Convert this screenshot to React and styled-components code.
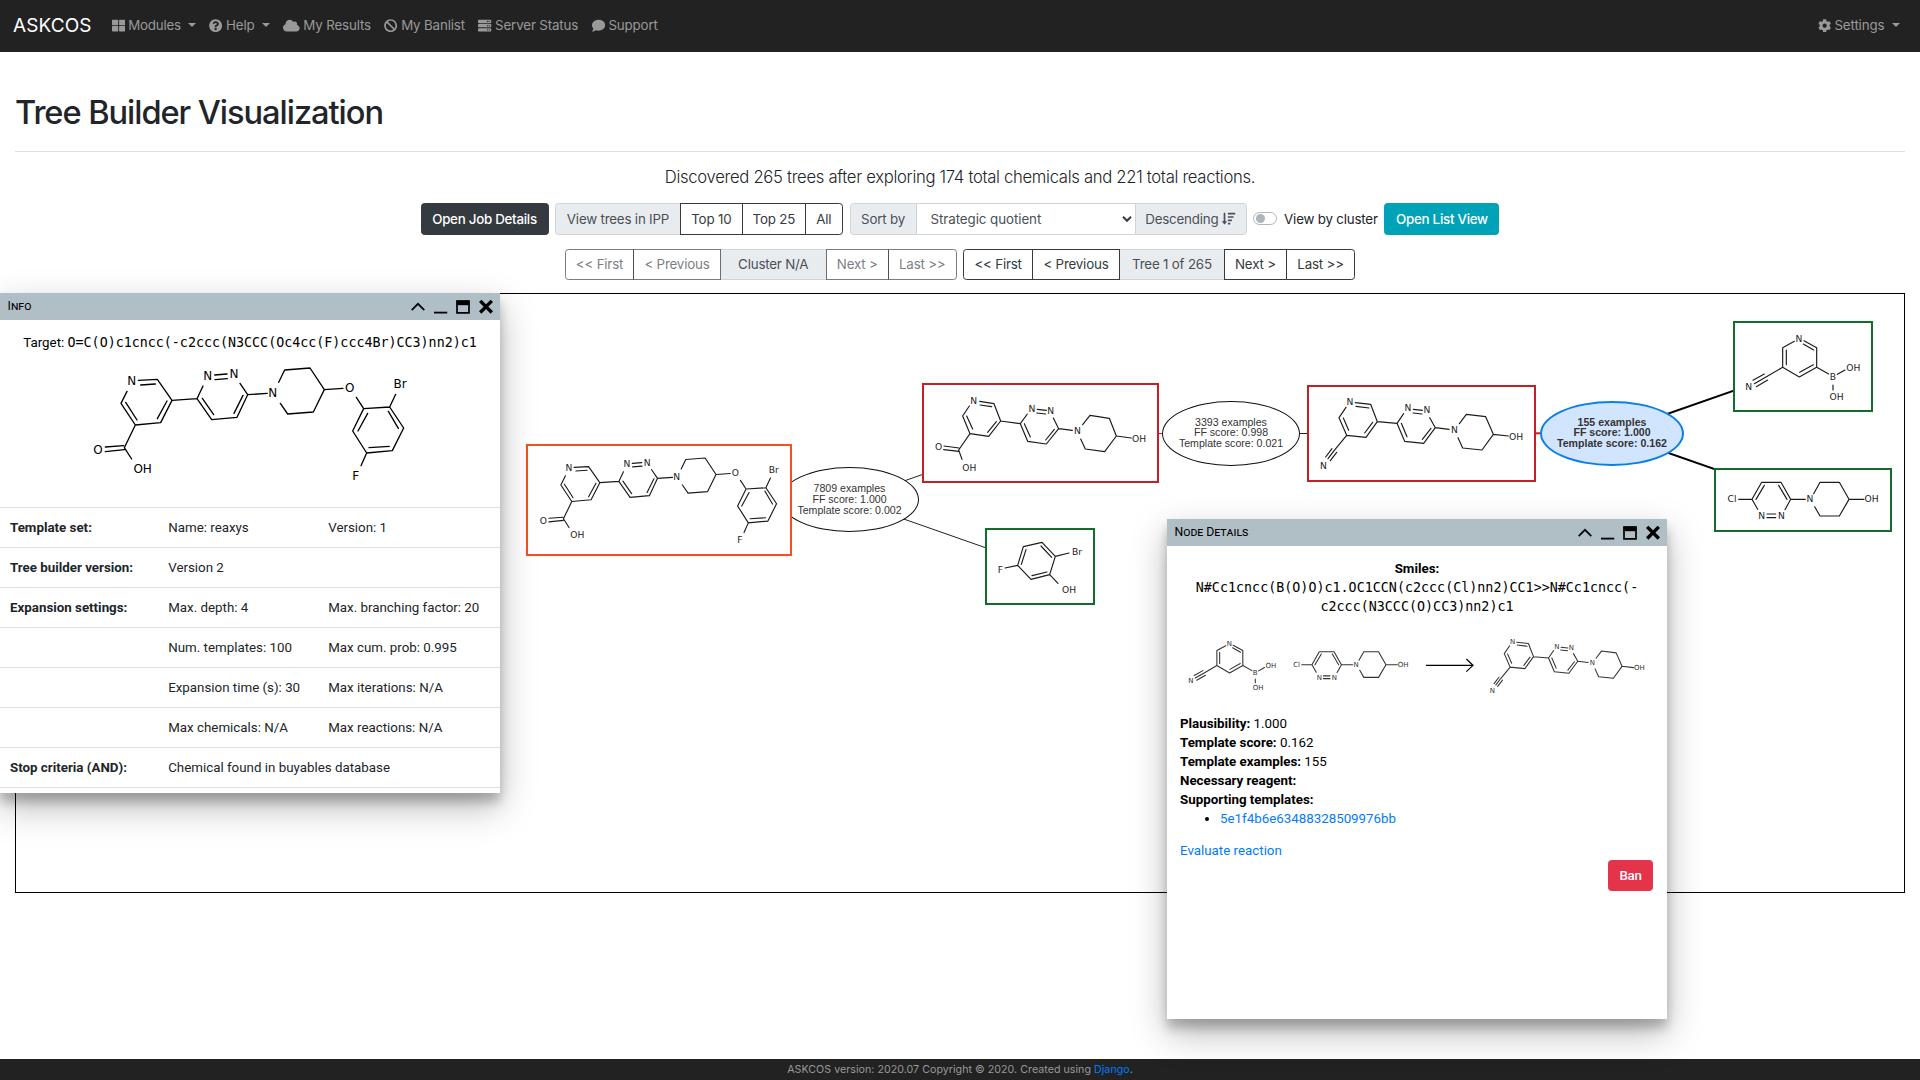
import React from "react";
import styled, { createGlobalStyle } from "styled-components";
import {
  FaThLarge,
  FaQuestionCircle,
  FaCloud,
  FaBan,
  FaServer,
  FaComment,
  FaCog,
  FaSortAmountDown,
} from "react-icons/fa";

const GlobalStyle = createGlobalStyle`
  *, *::before, *::after { box-sizing: border-box; }
  body {
    margin: 0;
    background: #fff;
    color: #212529;
    font-family: Inter, "Liberation Sans", sans-serif;
    font-size: 13.33px;
    line-height: 20px;
    letter-spacing: -0.19px;
    overflow: hidden;
  }
  a { color: #007bff; text-decoration: none; }
`;

/* ---------- page frame ---------- */

const Page = styled.div`
  position: relative;
  display: flex;
  flex-direction: column;
  height: 1080px;
  overflow: hidden;
`;

const Navbar = styled.nav`
  display: flex;
  align-items: center;
  height: 52px;
  padding: 0 20.5px 1.6px 13px;
  background: #222;
  color: #999;
  flex: none;
`;

const Brand = styled.span`
  width: 98.6px;
  color: #fff;
  font-size: 19px;
  letter-spacing: 0.1px;
  line-height: 25px;
`;

const NavLinks = styled.div`
  display: flex;
  gap: 13.5px;
  flex: 1;
`;

const NavLink = styled.a`
  display: flex;
  align-items: center;
  gap: 3.4px;
  color: #999;
  letter-spacing: ${(p) => p.$track || "-0.15px"};
  svg { width: ${(p) => p.$icon || 13.3}px; height: 13.3px; }
`;

const Caret = styled.span`
  margin-left: 3.8px;
  margin-top: -1px;
  border-top: 4px solid #999;
  border-left: 4px solid transparent;
  border-right: 4px solid transparent;
`;

const Main = styled.main`
  flex: 1;
  padding: 40.4px 15px 0;
`;

const Title = styled.h2`
  margin: 0;
  padding-bottom: 18.6px;
  border-bottom: 1px solid #dfe0e1;
  font-size: 32.6px;
  font-weight: 500;
  line-height: 40px;
  letter-spacing: -1.04px;
`;

const Lead = styled.p`
  margin: 13px 0 13px;
  font-size: 16.67px;
  font-weight: 300;
  line-height: 25px;
  letter-spacing: -0.31px;
  text-align: center;
`;

const Toolbar = styled.div`
  display: flex;
  justify-content: center;
  align-items: center;
  gap: ${(p) => p.$gap}px;
  height: ${(p) => p.$h}px;
  margin-bottom: ${(p) => p.$mb}px;
`;

const Cell = styled.div`
  display: flex;
  align-items: center;
  justify-content: center;
  gap: 4px;
  width: ${(p) => p.$w}px;
  height: 100%;
  border: 1px solid #ced4da;
  background: #e9ecef;
  color: #495057;
  white-space: nowrap;
`;

const Button = styled.button`
  position: relative;
  width: ${(p) => p.$w}px;
  height: 100%;
  padding: 0;
  border: 1px solid ${(p) => p.$fill || "#343a40"};
  border-radius: 3.4px;
  background: ${(p) => p.$fill || "#fff"};
  color: ${(p) => (p.$fill ? "#fff" : "#343a40")};
  font: inherit;
  font-weight: ${(p) => (p.$fill ? 500 : 400)};
  letter-spacing: ${(p) => (p.$fill ? "-0.26px" : "inherit")};
  white-space: nowrap;
  &:disabled { opacity: 0.65; }
`;

const Group = styled.div`
  display: flex;
  height: 100%;
  && > * { border-radius: 0; margin-left: -1px; }
  && > *:first-child { border-radius: 3.4px 0 0 3.4px; margin-left: 0; }
  && > *:last-child { border-radius: 0 3.4px 3.4px 0; }
`;

const SelectBox = styled(Cell)`
  justify-content: space-between;
  padding: 0 3px 0 14px;
  background: #fff;
  letter-spacing: -0.06px;
`;

const SwitchLabel = styled.label`
  display: flex;
  align-items: center;
  gap: 7px;
  width: 124.6px;
  white-space: nowrap;
`;

const SwitchTrack = styled.span`
  display: flex;
  align-items: center;
  width: 24px;
  height: 13px;
  padding-left: 1.5px;
  border: 1px solid #adb5bd;
  border-radius: 7px;
  &::before {
    content: "";
    width: 9px;
    height: 9px;
    border-radius: 50%;
    background: #adb5bd;
  }
`;

const Footer = styled.footer`
  flex: none;
  height: 21px;
  background: #222;
  color: #999;
  font-size: 10.67px;
  line-height: 21px;
  letter-spacing: 0.03px;
  text-align: center;
`;

/* ---------- tree canvas ---------- */

const Canvas = styled.div`
  position: relative;
  height: 600px;
  border: 1px solid #000;
`;

/* the network is laid out in page coordinates; this shifts it onto the canvas */
const Network = styled.div`
  position: absolute;
  left: -16px;
  top: -294px;
  width: 1920px;
  height: 900px;
`;

const Edges = styled.svg`
  position: absolute;
  left: 0;
  top: 0;
`;

const ChemicalNode = styled.div`
  position: absolute;
  left: ${(p) => p.$x}px;
  top: ${(p) => p.$y}px;
  width: ${(p) => p.$w}px;
  height: ${(p) => p.$h}px;
  border: 2px solid ${(p) => p.$color};
  background: #fff;
  svg { display: block; width: 100%; height: 100%; }
`;

const ReactionNode = styled.div`
  position: absolute;
  left: ${(p) => p.$x}px;
  top: ${(p) => p.$y}px;
  width: ${(p) => p.$w}px;
  height: 65px;
  padding-bottom: 1.5px;
  display: flex;
  flex-direction: column;
  justify-content: center;
  align-items: center;
  border: ${(p) => (p.$selected ? "2px solid #0b7fe8" : "1px solid #111")};
  border-radius: 50%;
  background: ${(p) => (p.$selected ? "#d2e5ff" : "#fff")};
  color: #343434;
  font: ${(p) => (p.$selected ? 700 : 400)} 10.6px/10.8px "Liberation Sans", sans-serif;
  letter-spacing: 0;
  white-space: nowrap;
`;

/* ---------- floating windows ---------- */

const Window = styled.section`
  position: absolute;
  left: ${(p) => p.$x}px;
  top: ${(p) => p.$y}px;
  width: 500px;
  height: 500px;
  overflow: hidden;
  background: #fff;
  color: #000;
  font-family: Roboto, sans-serif;
  letter-spacing: 0;
`;

const WindowShadow = styled.div`
  position: absolute;
  left: ${(p) => p.$x}px;
  top: ${(p) => p.$y}px;
  width: 500px;
  height: 500px;
  box-shadow: 0 14px 34px rgba(0, 0, 0, 0.28), 0 9px 10px rgba(0, 0, 0, 0.22);
`;

const WindowHeader = styled.header`
  display: flex;
  align-items: center;
  justify-content: space-between;
  height: 27px;
  padding: 0 7.2px 0 7.6px;
  background: #b0bec5;
`;

const WindowTitle = styled.span`
  font-size: 12.2px;
  font-variant: small-caps;
  line-height: 27px;
`;

const Controls = styled.div`
  display: flex;
  gap: 8.67px;
  svg { display: block; width: 14px; height: 14px; overflow: visible; }
`;

const Mono = styled.span`
  font-family: "DejaVu Sans Mono", monospace;
  font-size: 13.33px;
`;

const TargetLine = styled.div`
  padding-top: 13px;
  height: 33px;
  text-align: center;
  white-space: nowrap;
`;

const Drawing = styled.svg`
  display: block;
  width: ${(p) => p.$w}px;
  height: ${(p) => p.$h}px;
`;

const SettingsRow = styled.div`
  display: grid;
  grid-template-columns: 158.2px 160px 1fr;
  align-items: center;
  height: 40px;
  padding-left: 10px;
  border-top: 1px solid #dee2e6;
  color: #212529;
  white-space: nowrap;
  > *:nth-child(2):last-child { grid-column: 2 / 4; }
`;

const NodeBody = styled.div`
  padding: 13px 13px 0;
  line-height: 19px;
`;

const Smiles = styled.div`
  text-align: center;
`;

const SmilesLine = styled.div`
  height: 19px;
  letter-spacing: 0.02px;
  white-space: nowrap;
`;

const TemplateList = styled.ul`
  margin: 0 0 13.3px;
  padding-left: 40px;
`;

const BanRow = styled.div`
  display: flex;
  justify-content: flex-end;
  height: 31px;
  padding-right: 1px;
`;

/* ---------- molecules ---------- */

const molecules = {
  target: {
    font: 36,
    bonds:
      "M415 286L472 283L516 346L482 413L406 420L363 355L381 319M422 300L466 297M501 348L472 401M411 405L377 352" +
      "M516 346L591 341L609 303M644 270L681 267M645 284L682 281M720 295L743 329L711 397L635 404L591 341M729 331L702 385M641 389L607 340M743 329L802 325" +
      "M836 292L854 255L930 249L973 314L940 381L863 387L841 355M973 314L1029 310M1069 337L1091 371L1169 366L1211 429L1177 497L1100 504L1058 438L1091 371" +
      "M1103 385L1074 438M1165 379L1195 430M1168 484L1107 488M1169 366L1187 328M1100 504L1083 542M406 420L373 488L395 522M371 482L316 486M373 494L316 500",
    labels: [["N", 395, 300], ["N", 623, 285], ["N", 702, 279], ["N", 818, 337], ["O", 1049, 321], ["Br", 1200, 309], ["O", 294, 507], ["OH", 428, 564], ["F", 1067, 585]],
  },
  acid: {
    font: 27.5,
    bonds:
      "M209 94L252 101L272 153L236 199L180 191L158 138L178 108M210 105L245 110M259 155L233 187M188 177L170 138" +
      "M272 153L331 161L352 132M382 118L409 121M380 129L407 132M430 144L446 176L409 222L353 214L331 161M433 178L407 210M361 201L343 161M446 176L487 181" +
      "M518 164L540 136L598 145L619 198L584 245L526 237L512 207M619 198L664 204M180 191L146 240L156 268M147 234L102 228M146 244L101 239",
    labels: [["N", 191, 102], ["N", 366, 125], ["N", 422, 131], ["N", 502, 193], ["OH", 687, 215], ["O", 86, 240], ["OH", 178, 302]],
  },
  nitrile: {
    font: 27.5,
    bonds:
      "M196 98L242 103L262 155L228 202L170 196L147 143L168 112M198 109L237 114M248 157L224 189M176 181L160 144" +
      "M262 155L321 160L341 131M370 118L397 121M369 129L396 132M419 143L436 173L401 220L344 214L321 160M423 175L397 208M351 200L334 160M436 173L477 178" +
      "M508 161L529 133L587 140L610 193L576 240L518 234L504 203M610 193L655 198M170 196L133 241L114 266M126 236L107 261M140 247L121 272",
    labels: [["N", 180, 106], ["N", 354, 124], ["N", 411, 130], ["N", 493, 189], ["OH", 678, 209], ["N", 100, 297]],
  },
  boronic: {
    font: 27.5,
    bonds:
      "M403 124L368 143L368 202L418 231L470 202L470 143L432 122M379 150L379 194M419 217L460 194M461 150L430 132" +
      "M368 202L318 231L283 251M313 222L279 241M323 240L289 260M470 202L506 222M532 223L555 210M519 255L519 270",
    labels: [["N", 417, 126], ["N", 266, 269], ["B", 519, 241], ["OH", 580, 212], ["OH", 530, 299]],
  },
  chloride: {
    font: 27.5,
    bonds:
      "M236 598L276 598L305 547L363 547L392 598L375 629M293 628L276 598M288 598L313 556M356 556L381 598M321 642L347 642M321 653L347 653" +
      "M392 598L436 598M461 581L480 547L538 547L567 598L538 648L480 648L464 620M567 598L612 598",
    labels: [["Cl", 216, 607], ["N", 305, 658], ["N", 364, 658], ["N", 450, 607], ["OH", 635, 607]],
  },
  phenol: {
    font: 27.5,
    bonds:
      "M54 111L92 103L109 47L165 34L205 76L188 131L132 145L92 103M180 123L135 134M194 79L162 45M117 56L103 100M205 76L246 66M188 131L213 157",
    labels: [["F", 40, 125], ["Br", 270, 73], ["OH", 246, 186]],
  },
};

function Molecule({ name, width = 3.5, color = "#1c1c1c", transform }) {
  const m = molecules[name];
  return (
    <g transform={transform}>
      <path d={m.bonds} fill="none" stroke={color} strokeWidth={width} strokeLinecap="round" strokeLinejoin="round" />
      <g fill={color} fontFamily="DejaVu Sans, sans-serif" fontSize={m.font} textAnchor="middle" letterSpacing="0">
        {m.labels.map(([text, x, y]) => (
          <text key={`${x}-${y}`} x={x} y={y}>{text}</text>
        ))}
      </g>
    </g>
  );
}

const RED = "#c41e26";
const GREEN = "#146b2e";

const chemicalNodes = [
  { name: "target", x: 526, y: 444, w: 266, h: 112, color: "#f4511e", view: "233.8 201.8 1030 424.6", stroke: 4.5 },
  { name: "acid", x: 922, y: 383, w: 237, h: 100, color: RED, view: "42 45 699 288" },
  { name: "phenol", x: 985, y: 528, w: 110, h: 77, color: GREEN, view: "0 -3 318 219" },
  { name: "nitrile", x: 1307, y: 385, w: 229, h: 97, color: RED, view: "57 51 675 279" },
  { name: "boronic", x: 1733, y: 321, w: 140, h: 91, color: GREEN, view: "225 69 408 261" },
  { name: "chloride", x: 1714, y: 468, w: 178, h: 64, color: GREEN, view: "168 510 522 180" },
];

const reactionNodes = [
  { x: 780, y: 467.5, w: 139, lines: ["7809 examples", "FF score: 1.000", "Template score: 0.002"] },
  { x: 1162, y: 401, w: 138, lines: ["3393 examples", "FF score: 0.998", "Template score: 0.021"] },
  { x: 1540, y: 401, w: 144, lines: ["155 examples", "FF score: 1.000", "Template score: 0.162"], selected: true },
];

const settings = [
  ["Template set:", "Name: reaxys", "Version: 1"],
  ["Tree builder version:", "Version 2"],
  ["Expansion settings:", "Max. depth: 4", "Max. branching factor: 20"],
  ["", "Num. templates: 100", "Max cum. prob: 0.995"],
  ["", "Expansion time (s): 30", "Max iterations: N/A"],
  ["", "Max chemicals: N/A", "Max reactions: N/A"],
  ["Stop criteria (AND):", "Chemical found in buyables database"],
  ["", ""],
];

function WindowControls() {
  return (
    <Controls>
      <svg viewBox="0 0 14 14"><path d="M0.7 10.2L7 3.8L13.3 10.2" fill="none" stroke="#000" strokeWidth="1.7" /></svg>
      <svg viewBox="0 0 14 14"><path d="M0 12.6H13.2" stroke="#000" strokeWidth="1.8" /></svg>
      <svg viewBox="0 0 14 14"><path d="M1 1.2H13V12.9H1Z" fill="none" stroke="#000" strokeWidth="1.7" /><path d="M0.6 0.5H13.4V5.2H0.6Z" /></svg>
      <svg viewBox="0 0 14 14"><path d="M1.2 0.9L12.8 12.5M12.8 0.9L1.2 12.5" stroke="#000" strokeWidth="3.4" /></svg>
    </Controls>
  );
}

function TreeNetwork() {
  return (
    <Network>
      <Edges width="1920" height="900" fill="none" stroke="#222">
        <path d="M849.5 500L1040.5 433.3M849.5 500L1040.5 567" />
        <path d="M1230 433.5H1420" />
        <path d="M1150 433.5H1170" stroke={RED} />
        <path d="M1530 433.3H1550" stroke={RED} strokeWidth="2" />
        <path d="M1612 433.3L1803 366.5M1612 433.3L1803 500" stroke="#000" strokeWidth="2" />
      </Edges>
      {reactionNodes.map((n) => (
        <ReactionNode key={n.x} $x={n.x} $y={n.y} $w={n.w} $selected={n.selected}>
          {n.lines.map((line) => <span key={line}>{line}</span>)}
        </ReactionNode>
      ))}
      {chemicalNodes.map((n) => (
        <ChemicalNode key={n.name} $x={n.x} $y={n.y} $w={n.w} $h={n.h} $color={n.color}>
          <svg viewBox={n.view}><Molecule name={n.name} width={n.stroke} /></svg>
        </ChemicalNode>
      ))}
    </Network>
  );
}

function InfoWindow() {
  return (
    <Window $x={0} $y={293}>
      <WindowHeader><WindowTitle>Info</WindowTitle><WindowControls /></WindowHeader>
      <TargetLine>Target: <Mono>O=C(O)c1cncc(-c2ccc(N3CCC(Oc4cc(F)ccc4Br)CC3)nn2)c1</Mono></TargetLine>
      <Drawing $w={500} $h={154} viewBox="0 204 1500 462"><Molecule name="target" width={4} color="#000" /></Drawing>
      {settings.map(([head, a, b], i) => (
        <SettingsRow key={i}>
          <b>{head}</b>
          <span>{a}</span>
          {b && <span>{b}</span>}
        </SettingsRow>
      ))}
    </Window>
  );
}

function NodeWindow() {
  return (
    <Window $x={1167} $y={519}>
      <WindowHeader><WindowTitle>Node Details</WindowTitle><WindowControls /></WindowHeader>
      <NodeBody>
        <Smiles>
          <SmilesLine><b>Smiles:</b></SmilesLine>
          <SmilesLine><Mono>N#Cc1cncc(B(O)O)c1.OC1CCN(c2ccc(Cl)nn2)CC1&gt;&gt;N#Cc1cncc(-</Mono></SmilesLine>
          <SmilesLine><Mono>c2ccc(N3CCC(O)CC3)nn2)c1</Mono></SmilesLine>
        </Smiles>
        <Drawing $w={474} $h={98} viewBox="60 318 1422 294">
          <Molecule name="boronic" width={4.2} color="#333" transform="translate(208 401) scale(.763) translate(-417 -116)" />
          <Molecule name="chloride" width={4.2} color="#333" transform="translate(410 464) scale(.763) translate(-216 -598)" />
          <path d="M798 466H938M919 447L939 466L919 485" fill="none" stroke="#000" strokeWidth="3.6" />
          <Molecule name="nitrile" width={4.2} color="#333" transform="translate(1058 395) scale(.763) translate(-180 -96)" />
        </Drawing>
        <div><b>Plausibility:</b> 1.000</div>
        <div><b>Template score:</b> 0.162</div>
        <div><b>Template examples:</b> 155</div>
        <div><b>Necessary reagent:</b></div>
        <div><b>Supporting templates:</b></div>
        <TemplateList><li><a href="#template">5e1f4b6e63488328509976bb</a></li></TemplateList>
        <div><a href="#evaluate">Evaluate reaction</a></div>
        <BanRow><Button $w={45} $fill="#e4344a">Ban</Button></BanRow>
      </NodeBody>
    </Window>
  );
}

export default function App() {
  return (
    <Page>
      <GlobalStyle />
      <Navbar>
        <Brand>ASKCOS</Brand>
        <NavLinks>
          <NavLink $track="-0.24px"><FaThLarge />Modules <Caret /></NavLink>
          <NavLink><FaQuestionCircle />Help <Caret /></NavLink>
          <NavLink $icon={16.7}><FaCloud />My Results</NavLink>
          <NavLink><FaBan />My Banlist</NavLink>
          <NavLink><FaServer />Server Status</NavLink>
          <NavLink><FaComment />Support</NavLink>
        </NavLinks>
        <NavLink><FaCog />Settings <Caret /></NavLink>
      </Navbar>

      <Main>
        <Title>Tree Builder Visualization</Title>
        <Lead>Discovered 265 trees after exploring 174 total chemicals and 221 total reactions.</Lead>

        <Toolbar $gap={6.7} $h={32} $mb={14}>
          <Button $w={128} $fill="#343a40">Open Job Details</Button>
          <Group>
            <Cell $w={125.6}>View trees in IPP</Cell>
            <Button $w={63}>Top 10</Button>
            <Button $w={64}>Top 25</Button>
            <Button $w={38}>All</Button>
          </Group>
          <Group>
            <Cell $w={67}>Sort by</Cell>
            <SelectBox $w={220}>
              Strategic quotient
              <svg width="10" height="6" viewBox="0 0 10 6"><path d="M1 0.8L5 4.8L9 0.8" fill="none" stroke="#343a40" strokeWidth="2" /></svg>
            </SelectBox>
            <Cell $w={112}>Descending<FaSortAmountDown size={13.3} /></Cell>
          </Group>
          <SwitchLabel><SwitchTrack />View by cluster</SwitchLabel>
          <Button $w={115} $fill="#00a2b8">Open List View</Button>
        </Toolbar>

        <Toolbar $gap={6.5} $h={31} $mb={13}>
          <Group>
            <Button disabled $w={69.5}>&lt;&lt; First</Button>
            <Button disabled $w={87.5}>&lt; Previous</Button>
            <Cell $w={107}>Cluster N/A</Cell>
            <Button disabled $w={63}>Next &gt;</Button>
            <Button disabled $w={69}>Last &gt;&gt;</Button>
          </Group>
          <Group>
            <Button $w={69.7}>&lt;&lt; First</Button>
            <Button $w={88}>&lt; Previous</Button>
            <Cell $w={106}>Tree 1 of 265</Cell>
            <Button $w={63}>Next &gt;</Button>
            <Button $w={69.3}>Last &gt;&gt;</Button>
          </Group>
        </Toolbar>

        <Canvas><TreeNetwork /></Canvas>
      </Main>

      <WindowShadow $x={0} $y={293} />
      <WindowShadow $x={1167} $y={519} />
      <InfoWindow />
      <NodeWindow />

      <Footer>ASKCOS version: 2020.07 Copyright © 2020. Created using <a href="#django">Django</a>.</Footer>
    </Page>
  );
}
